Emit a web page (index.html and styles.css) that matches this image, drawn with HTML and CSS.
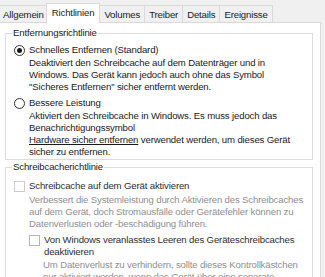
FILE: index.html
```html
<!DOCTYPE html>
<html lang="de">
<head>
  <meta charset="UTF-8" />
  <title>Eigenschaften – Richtlinien</title>
  <link rel="stylesheet" href="styles.css">
</head>
<body>
  <div class="dialog">
    <div class="tabs">
      <div class="tab">Allgemein</div>
      <div class="tab active">Richtlinien</div>
      <div class="tab">Volumes</div>
      <div class="tab">Treiber</div>
      <div class="tab">Details</div>
      <div class="tab">Ereignisse</div>
    </div>

    <div class="panel">
      <fieldset class="group">
        <legend>Entfernungsrichtlinie</legend>

        <div class="option">
          <span class="radio checked"></span>
          <span>Schnelles Entfernen (Standard)</span>
        </div>
        <p class="desc">Deaktiviert den Schreibcache auf dem Datenträger und in<br>Windows. Das Gerät kann jedoch auch ohne das Symbol<br>"Sicheres Entfernen" sicher entfernt werden.</p>

        <div class="option">
          <span class="radio"></span>
          <span>Bessere Leistung</span>
        </div>
        <p class="desc last">Aktiviert den Schreibcache in Windows. Es muss jedoch das<br>Benachrichtigungssymbol<br><a href="#">Hardware sicher entfernen</a> verwendet werden, um dieses Gerät<br>sicher zu entfernen.</p>
      </fieldset>

      <fieldset class="group cache">
        <legend>Schreibcacherichtlinie</legend>

        <div class="option">
          <span class="check disabled"></span>
          <span class="label-dim">Schreibcache auf dem Gerät aktivieren</span>
        </div>
        <p class="desc muted">Verbessert die Systemleistung durch Aktivieren des Schreibcaches<br>auf dem Gerät, doch Stromausfälle oder Gerätefehler können zu<br>Datenverlusten oder -beschädigung führen.</p>

        <div class="option sub">
          <span class="check"></span>
          <span class="label-dim">Von Windows veranlasstes Leeren des Geräteschreibcaches<br>deaktivieren</span>
        </div>
        <p class="desc muted sub-desc">Um Datenverlust zu verhindern, sollte dieses Kontrollkästchen<br>nur aktiviert werden, wenn das Gerät über eine separate</p>
      </fieldset>
    </div>
  </div>
</body>
</html>
```

FILE: styles.css
```css
:root {
  --bg-color: #f0f0f0;
  --panel-color: #ffffff;
  --border-color: #d9d9d9;
  --group-border: #dcdcdc;
  --text-color: #1a1a1a;
  --muted-color: #8f8f8f;
  --font-family: 'Liberation Sans', Arial, sans-serif;
}

body {
  margin: 0;
  padding: 0;
  font-family: var(--font-family);
  font-size: 9.6px;
  letter-spacing: -0.15px;
  line-height: 12px;
  background-color: var(--bg-color);
  color: var(--text-color);
  overflow: hidden;
}

.dialog {
  padding-top: 6px;
}

.tabs {
  display: flex;
  align-items: flex-end;
  height: 16px;
  margin-left: -2px;
  position: relative;
  z-index: 1;
}

.tab {
  height: 16px;
  line-height: 17px;
  padding: 0 4px;
  margin-right: -1px;
  border: 1px solid var(--border-color);
  border-bottom: none;
  background-color: var(--bg-color);
  white-space: nowrap;
}

.tab.active {
  height: 19px;
  line-height: 18px;
  padding: 0 5px;
  margin: 0 -1px -1px -2px;
  background-color: var(--panel-color);
  position: relative;
  z-index: 2;
}

.panel {
  margin-right: 4px;
  padding: 4px 7px 0 5px;
  height: 260px;
  background-color: var(--panel-color);
  border: 1px solid var(--border-color);
  border-left: none;
}

.group {
  margin: 0;
  padding: 5px 6px 1px 8px;
  border: 1px solid var(--group-border);
}

.group + .group {
  margin-top: 1px;
}

.group legend {
  padding: 0 1px;
  margin-left: -2px;
  line-height: 12px;
}

.option {
  display: flex;
  align-items: flex-start;
  gap: 4px;
  margin-bottom: 1px;
  white-space: nowrap;
}

.desc {
  margin: 0 0 4px 15px;
  white-space: nowrap;
}

.desc.last {
  margin-bottom: 0;
}

.desc a {
  color: inherit;
}

.cache {
  padding-top: 7px;
}

.cache .option {
  margin-bottom: 2px;
}

.cache .option.sub {
  margin-bottom: 1px;
}

.radio {
  width: 9px;
  height: 9px;
  margin-top: 1px;
  border: 1px solid #333;
  border-radius: 50%;
  background-color: #fff;
  flex-shrink: 0;
  display: flex;
  align-items: center;
  justify-content: center;
}

.radio.checked::after {
  content: "";
  width: 5px;
  height: 5px;
  border-radius: 50%;
  background-color: #1a1a1a;
}

.check {
  width: 9px;
  height: 9px;
  margin-top: 1px;
  border: 1px solid #b4b4b4;
  background-color: #fff;
  flex-shrink: 0;
}

.check.disabled {
  border-color: #cccccc;
}

.label-dim {
  color: #2e2e2e;
}

.muted {
  color: var(--muted-color);
}

.sub {
  margin-left: 15px;
}

.sub-desc {
  margin-left: 29px;
  margin-bottom: 0;
}
```
